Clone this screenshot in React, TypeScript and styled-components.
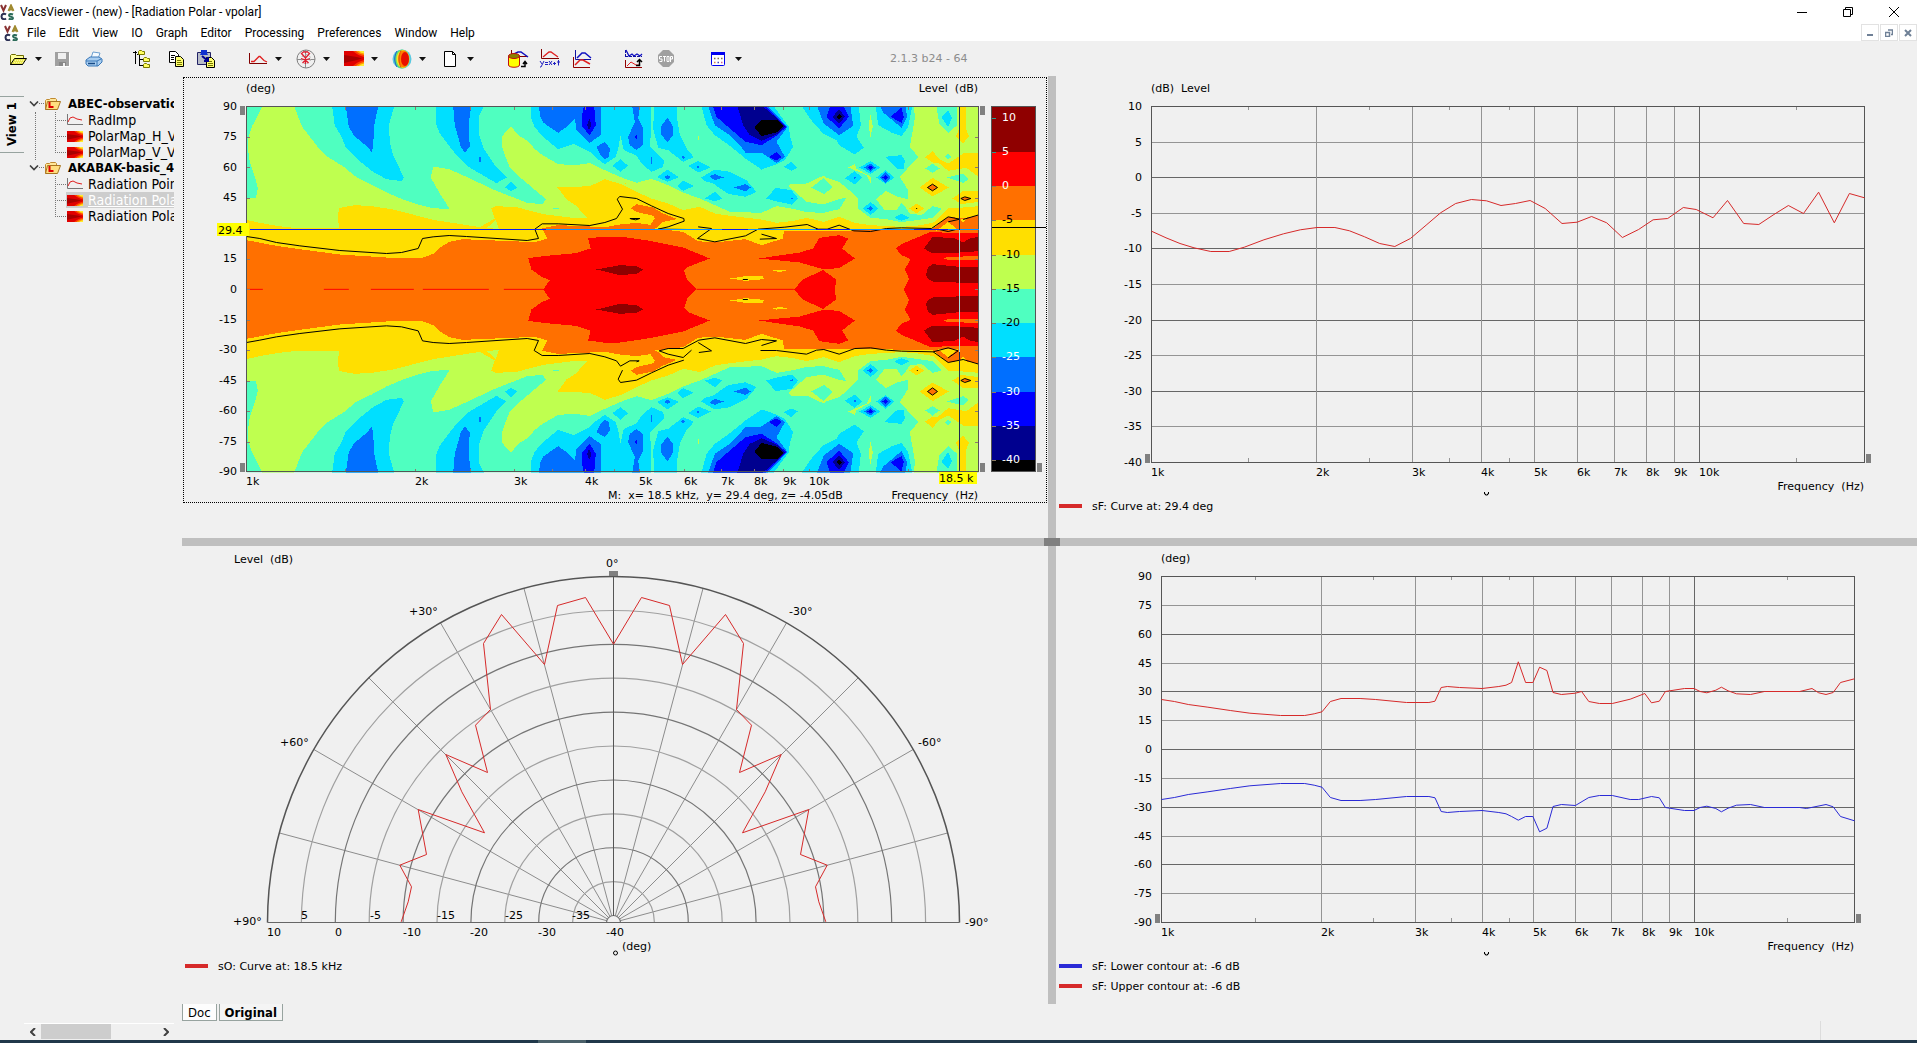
import React from "react";
import styled, { createGlobalStyle, css } from "styled-components";

const GlobalStyle = createGlobalStyle`
  *, *::before, *::after { box-sizing: border-box; }
  body { margin: 0; background: #f0f0f0; color: #000; font-family: "DejaVu Sans", Verdana, sans-serif; font-size: 11px; }
  button { font: inherit; color: inherit; border: 0; background: none; padding: 0; margin: 0; cursor: default; }
  ul { list-style: none; margin: 0; padding: 0; }
  svg { flex: none; }
`;

const UI_FONT = `Roboto, "Segoe UI", sans-serif`;
const TREE_FONT = `"DejaVu Sans Condensed", "DejaVu Sans", Tahoma, sans-serif`;

/* ---------- window frame ---------- */

const Window = styled.div`
  display: flex;
  flex-direction: column;
  min-height: 100vh;
`;
const TitleBar = styled.header`
  display: flex;
  align-items: center;
  height: 24px;
  background: #fff;
  font: 12px/16px ${UI_FONT};
`;
const Title = styled.h1`
  flex: 1;
  margin: 0 0 0 5px;
  font: inherit;
`;
const CaptionButton = styled.button`
  display: flex;
  align-items: center;
  justify-content: center;
  width: 46px;
  height: 20px;
`;
const MenuBar = styled.nav`
  display: flex;
  align-items: center;
  height: 17px;
  padding-left: 4px;
  background: #fff;
  font: 12px/16px ${UI_FONT};
`;
const MenuButton = styled.button`
  margin-left: 13px;
  height: 17px;
  &:first-of-type { margin-left: 8px; }
`;
const MdiButtons = styled.div`
  display: flex;
  gap: 1px;
  margin-left: auto;
`;
const MdiButton = styled.button`
  display: flex;
  align-items: center;
  justify-content: center;
  width: 18px;
  height: 17px;
  border: 1px solid #e2e2e2;
`;

/* ---------- toolbar ---------- */

const Toolbar = styled.div`
  display: flex;
  align-items: center;
  height: 35px;
  padding-left: 4px;
`;
const ToolGroup = styled.div<{ $before?: number; $gap?: number }>`
  display: flex;
  gap: ${(p) => p.$gap ?? 0}px;
  margin-left: ${(p) => p.$before ?? 0}px;
`;
const Split = styled.div`
  display: flex;
`;
const ToolButton = styled.button<{ $narrow?: boolean }>`
  display: flex;
  align-items: center;
  justify-content: center;
  width: ${(p) => (p.$narrow ? 28 : 32)}px;
  height: 28px;
`;
const DropButton = styled.button`
  display: flex;
  align-items: center;
  justify-content: center;
  width: 12px;
  height: 28px;
`;
const Version = styled.span`
  margin-left: 146px;
  color: #8c8c8c;
  font-size: 11px;
  white-space: nowrap;
`;

/* ---------- sidebar ---------- */

const Body = styled.div`
  display: flex;
  flex: 1;
`;
const Sidebar = styled.aside`
  display: flex;
  flex: 0 0 182px;
  padding-right: 8px;
`;
const ViewRail = styled.div`
  flex: 0 0 24px;
  padding-top: 20px;
`;
const ViewTab = styled.button`
  width: 24px;
  height: 57px;
  border: solid #97a39f;
  border-width: 1px 0;
  writing-mode: vertical-rl;
  transform: rotate(180deg);
  font: bold 13px/24px ${TREE_FONT};
`;
const TreeColumn = styled.div`
  display: flex;
  flex-direction: column;
  justify-content: space-between;
  width: 150px;
  padding-top: 20px;
  overflow: hidden;
`;
const Tree = styled.ul`
  font: 14px/16px ${TREE_FONT};
  white-space: nowrap;
`;
const RootButton = styled.button`
  display: flex;
  align-items: center;
  height: 16px;
  padding-left: 5px;
  font-size: 13px;
  font-weight: bold;
`;
const RootText = styled.span`
  margin-left: 7px;
`;
const Branch = styled.ul<{ $continued?: boolean }>`
  margin-left: 11px;
  padding-left: 19px;
  border-left: 1px dotted ${(p) => (p.$continued ? "#777" : "transparent")};
`;
const Leaf = styled.li`
  display: flex;
  align-items: center;
  height: 16px;
  &::before {
    content: "";
    align-self: stretch;
    width: 11px;
    flex: none;
    background:
      repeating-linear-gradient(90deg, #777 0 1px, transparent 1px 2px) 0 8px / 11px 1px no-repeat,
      repeating-linear-gradient(180deg, #777 0 1px, transparent 1px 2px) 0 0 / 1px 16px no-repeat;
  }
  &:last-child::before {
    background:
      repeating-linear-gradient(90deg, #777 0 1px, transparent 1px 2px) 0 8px / 11px 1px no-repeat,
      repeating-linear-gradient(180deg, #777 0 1px, transparent 1px 2px) 0 0 / 1px 8px no-repeat;
  }
`;
const LeafButton = styled.button<{ $selected?: boolean }>`
  display: flex;
  align-items: center;
  gap: 5px;
  height: 16px;
  flex: 1;
  padding-left: 1px;
  ${(p) =>
    p.$selected &&
    css`
      background: #cdcdcd;
      color: #fff;
      text-decoration: underline;
    `}
`;
const ScrollBar = styled.div`
  display: flex;
  align-items: center;
  height: 17px;
  border-top: 1px solid #fff;
`;
const ScrollArrow = styled.button`
  display: flex;
  align-items: center;
  justify-content: center;
  flex: 0 0 17px;
  height: 16px;
`;
const ScrollTrack = styled.div`
  flex: 1;
  height: 16px;
`;
const ScrollThumb = styled.div`
  width: 60%;
  height: 15px;
  background: #cdcdcd;
`;

/* ---------- graph workspace ---------- */

const Workspace = styled.main`
  display: flex;
  flex: 1;
  flex-direction: column;
  min-width: 0;
`;
const Panes = styled.div`
  display: grid;
  flex: 1;
  grid-template-columns: 866fr 8px 861fr;
  grid-template-rows: 462fr 8px 458fr;
`;
const Pane = styled.section<{ $col: number; $row: number }>`
  grid-column: ${(p) => p.$col};
  grid-row: ${(p) => p.$row};
  min-width: 0;
`;
const FocusFrame = styled.div`
  margin: 1px;
  border: 1px dotted #000;
`;
const HSplitter = styled.div`
  grid-column: 1 / 4;
  grid-row: 2;
  background: #bfbfbf;
`;
const VSplitter = styled.div`
  grid-column: 2;
  grid-row: 1 / 4;
  background: #bfbfbf;
`;
const SplitterKnob = styled.div`
  grid-column: 2;
  grid-row: 2;
  margin: 0 -4px;
  background: #808080;
  z-index: 1;
`;
const Chart = styled.svg`
  display: block;
  width: 100%;
  height: auto;
  font-family: "DejaVu Sans", Verdana, sans-serif;
  font-size: 11px;
  text { white-space: pre; }
`;
const Legend = styled.ul`
  padding-left: 3px;
`;
const LegendItem = styled.li`
  display: flex;
  align-items: center;
  gap: 10px;
  height: 20px;
`;
const Swatch = styled.span<{ $color: string }>`
  width: 23px;
  height: 4px;
  background: ${(p) => p.$color};
`;
const SheetTabs = styled.div`
  display: flex;
  gap: 2px;
  height: 17px;
`;
const SheetTab = styled.button<{ $active?: boolean }>`
  padding: 0 5px;
  height: 17px;
  border: solid #97a39f;
  border-width: 0 1px 1px;
  background: ${(p) => (p.$active ? "#f4f4f4" : "#fdfdfd")};
  font: ${(p) => (p.$active ? "bold 13px" : "13px")} / 15px ${TREE_FONT};
`;
const StatusBar = styled.div`
  height: 19px;
  margin-right: 96px;
  border-right: 1px solid #dcdcdc;
`;
const TaskEdge = styled.footer`
  height: 3px;
  padding-left: 538px;
  background: #20384a;
`;
const TaskActive = styled.div`
  width: 48px;
  height: 3px;
  background: #4a6069;
`;

/* ---------- helpers ---------- */

const RED = "#d62a2a";
const BLUE = "#2a2ad6";

const points = (flat: number[], ox: number, oy: number, sx: number, sy: number) =>
  flat
    .map((n, i) => (i % 2 ? (n - oy) * sy : (n - ox) * sx))
    .reduce((out, n, i) => out + (i % 2 ? "," + n.toFixed(1) + " " : n.toFixed(1)), "");

const logPos = (khz: number) => Math.log10(khz) / Math.log10(20);
const KHZ = [1, 2, 3, 4, 5, 6, 7, 8, 9, 10];
const HALF_TICKS = [1.5, 2.5, 3.5, 4.5, 15];

/* ---------- polar map ---------- */

const C = {
  darkRed: "#8f0000", red: "#ff0000", orange: "#ff7000", yellow: "#ffdf00", green: "#bfff4f",
  aqua: "#4fffc0", cyan: "#00dfff", azure: "#006fff", blue: "#0000ff", navy: "#00008f", black: "#000000",
};

/* Contour outlines in map units (3 units per pixel); numbers after "|" belong to the right-hand tile. */
const SHAPES: [string, string][] = [
  [C.green, "247 94 343 94 367 155 415 217 445 246 495 277 525 303 575 328 620 352 665 371 715 388 760 399 810 402 780 355 753 308 760 274 808 282 860 305 940 343 1042 383 1088 387 1098 372 1025 310 990 277 975 240 966 212 966 184 993 153 1015 180 1045 198 1065 222 1088 240 1135 267 1187 270 1230 264 1275 285 1320 305 | 110 323 155 311 205 330 250 352 300 370 345 390 390 410 485 413 530 393 575 400 620 411 670 413 718 402 740 368 716 372 670 388 620 380 580 345 565 333 575 325 620 325 672 301 680 307 718 320 748 345 775 372 775 400 812 428 860 432 905 441 950 435 1000 428 1025 400 998 393 975 412 965 420 930 415 920 400 905 382 890 405 855 405 828 372 858 348 895 365 925 372 925 345 900 305 955 245 930 215 945 130 943 94 1136 94 1136 643 | 200 643 200 370 228 368 234 340 225 305 210 260 204 220 206 185 216 155"],
  [C.yellow, "200 434 240 443 290 452 350 459 478 459 474 430 477 400 490 396 525 390 575 393 640 403 760 434 900 456 945 430 935 400 948 393 1010 396 1090 417 1187 429 1222 428 1187 390 1160 373 1133 337 1230 333 1275 312 1320 326 | 110 323 155 313 205 385 205 372 250 405 300 395 345 415 390 422 485 433 530 443 580 437 620 428 672 440 718 425 765 443 812 450 905 455 950 452 1000 443 1045 400 1090 397 1136 393 1136 643 | 200 643"],
  [C.green, "| 62 326 110 350 155 370 205 385 250 405 250 352 205 330 155 311 110 323"],
  [C.green, "920 459 948 435 957 461"],
  [C.aqua, "1120 400 1138 399 1135 403"],
  [C.orange, "200 495 290 512 360 522 480 538 650 549 725 549 762 535 780 518 808 500 850 492 1065 501 1103 490 1087 459 1135 450 1187 452 1275 456 1320 448 | 110 443 152 449 165 430 160 422 110 410 93 400 110 387 160 397 190 415 232 432 190 440 175 455 165 460 250 470 295 498 345 502 437 492 485 510 550 490 552 466 760 466 1000 460 1045 424 1085 430 1136 420 1136 643 | 200 643"],
  [C.yellow, "| 1010 466 1045 440 1075 464"],
  [C.yellow, "| 1080 430 1102 430 1090 443"],
  [C.red, "1088 643 1110 615 1085 605 1055 583 1045 549 1100 542 1187 534 1232 520 1225 490 1270 484 1320 484 | 150 497 250 517 330 550 265 575 253 587 262 615 293 643"],
  [C.red, "| 478 550 530 542 600 532 640 520 658 488 718 480 745 490 727 520 765 550 718 579 670 582 600 562"],
  [C.red, "| 580 643 610 612 670 585 708 612 706 643"],
  [C.red, "| 888 520 905 507 990 471 1136 475 1136 643 911 643 928 612 915 583 932 552 905 540"],
  [C.darkRed, "| -10 583 60 570 110 573 130 583 110 596 60 600"],
  [C.darkRed, "| 972 520 998 486 1060 488 1090 502 1110 490 1136 485 1136 528 1065 533 998 535"],
  [C.darkRed, "| 978 600 985 576 998 567 1090 576 1136 574 1136 624 1000 620 985 612"],
  [C.orange, "| 1030 549 1045 545 1136 543 1136 555 1045 554"],
  [C.yellow, "| 515 585 530 583 568 584 540 591"],
  [C.yellow, "| 390 610 437 603 488 603 492 612 437 617"],
  [C.cyan, "457 94 643 94 627 150 630 200 640 240 672 307 667 318 620 312 580 290 545 262 497 215 483 180 465 152"],
  [C.azure, "498 94 595 94 583 150 580 215 575 231 563 215 523 182 507 155"],
  [C.cyan, "768 94 912 94 897 125 897 175 912 220 948 275 980 307 950 324 900 295 866 275 830 240 808 212 780 175 770 150"],
  [C.azure, "820 94 874 94 866 150 870 215 855 232 843 215 825 150"],
  [C.azure, "897 246 903 246 901 277"],
  [C.cyan, "976 337 993 320 1013 337 993 348"],
  [C.cyan, "1055 94 1052 125 1065 157 1090 185 1135 222 1183 206 1230 230 1248 248 1275 267 | 48 245 55 220 62 183 72 225 108 240 130 270 155 290 190 275 193 255 150 215 155 150 153 94"],
  [C.azure, "1078 94 1262 94 1262 180 1230 203 1190 165 1185 130 1165 152 1135 173 1090 142 1080 120"],
  [C.blue, "1212 94 1243 94 1248 150 1230 180 1207 155 1207 120"],
  [C.navy, "1222 150 1228 130 1235 150 1228 165"],
  [C.azure, "1250 215 1275 200 1290 220 1288 245 1275 252 1262 240"],
  [C.azure, "| 97 94 120 94 115 130 130 160 128 210 110 225 90 210 85 185 105 140"],
  [C.blue, "| 105 185 109 178 112 185 109 193"],
  [C.azure, "| 152 246 157 246 155 266"],
  [C.cyan, "| 38 272 62 252 85 272 62 290"],
  [C.cyan, "| 163 94 232 94 232 130 240 180 260 220 282 246 250 260 205 225 175 218 160 160"],
  [C.azure, "| 183 155 203 127 220 155 218 183 203 200 183 178"],
  [C.azure, "| 244 246 250 241 256 246 250 252"],
  [C.green, "| 293 185 296 181 298 190 295 195"],
  [C.cyan, "| 172 306 203 283 237 306 203 320"],
  [C.azure, "| 193 306 203 299 213 306 203 313"],
  [C.cyan, "| 265 272 295 257 332 277 295 292"],
  [C.azure, "| 290 275 296 272 300 276 295 279"],
  [C.cyan, "| 232 333 250 317 282 333 250 347"],
  [C.cyan, "| 315 370 345 350 368 370 345 378"],
  [C.cyan, "| 305 307 345 283 390 290 440 315 470 350 437 365 385 356 340 325 315 318"],
  [C.azure, "| 328 303 345 297 372 307 345 315"],
  [C.azure, "| 402 337 437 327 453 337 437 349"],
  [C.cyan, "| 500 370 527 338 575 345 595 370 575 388 527 378"],
  [C.azure, "| 572 370 577 368 580 371 577 374"],
  [C.cyan, "| 305 94 522 94 567 155 570 180 580 215 555 255 530 268 485 283 437 250 390 212 345 180 320 150"],
  [C.azure, "| 325 94 505 94 563 155 530 200 555 245 530 264 485 232 437 232 420 210 390 180 345 150"],
  [C.blue, "| 340 94 498 94 560 155 530 182 485 210 437 200 390 160 350 125"],
  [C.navy, "| 413 94 490 94 520 120 556 155 530 178 485 197 450 180 430 150"],
  [C.black, "| 463 155 485 135 530 133 552 153 530 172 485 183"],
  [C.blue, "| 507 246 530 231 545 246 530 256"],
  [C.cyan, "| 552 275 575 260 593 277 575 286"],
  [C.cyan, "| 607 94 777 94 783 150 770 185 792 217 765 238 718 210 710 195 670 175 630 130"],
  [C.azure, "| 652 94 752 94 760 152 718 180 672 145"],
  [C.blue, "| 690 94 732 94 747 125 718 160 680 125"],
  [C.navy, "| 698 125 718 102 735 125 718 145"],
  [C.black, "| 710 125 718 116 727 125 718 133"],
  [C.green, "| 812 120 819 155 812 185 806 152"],
  [C.cyan, "| 828 94 937 94 925 155 905 183 875 172 835 150"],
  [C.azure, "| 842 94 917 94 922 125 905 158 850 112"],
  [C.blue, "| 872 125 905 97 912 125 905 143"],
  [C.aqua, "| 1010 94 1070 94 1072 150 1045 173 1018 145"],
  [C.cyan, "| 1025 126 1045 105 1056 128 1045 156"],
  [C.yellow, "| 1080 94 1098 94 1098 160 1107 183 1090 205 1068 185 1082 150"],
  [C.yellow, "| 976 247 998 228 1020 253 1045 265 1090 235 1136 232 1136 305 1100 278 1045 287 1015 262 998 262"],
  [C.aqua, "| 1034 245 1045 236 1056 245 1045 252"],
  [C.aqua, "| 976 280 998 265 1020 280 998 293"],
  [C.aqua, "| 1043 307 1090 295 1107 312 1090 323"],
  [C.cyan, "| 855 245 905 240 915 255 912 283 890 280"],
  [C.green, "| 745 277 765 266 770 280 813 305 812 325 800 300"],
  [C.cyan, "| 778 277 812 258 842 277 812 296"],
  [C.azure, "| 793 277 812 265 828 277 812 290"],
  [C.blue, "| 803 277 812 271 820 277 812 284"],
  [C.cyan, "| 735 309 765 288 786 307 765 328"],
  [C.azure, "| 760 308 765 304 769 308 765 312"],
  [C.cyan, "| 830 307 857 285 884 307 857 326"],
  [C.azure, "| 840 307 857 290 872 307 857 322"],
  [C.blue, "| 848 307 857 300 864 307 857 314"],
  [C.cyan, "| 790 400 812 380 836 400 812 420"],
  [C.azure, "| 803 400 812 393 820 400 812 408"],
  [C.cyan, "| 883 428 905 415 930 428 905 437"],
  [C.aqua, "| 635 337 672 308 698 337 672 357"],
  [C.yellow, "| 960 337 998 308 1047 337 998 364"],
  [C.orange, "| 983 337 998 326 1013 337 998 348"],
  [C.yellow, "| 928 400 950 385 973 400 950 414"],
  [C.yellow, "| 1058 370 1090 347 1136 347 1136 380 1085 387"],
  [C.orange, "| 1083 370 1095 364 1112 370 1095 376"],
];

const UPPER_LINES = [
  "200 484 240 490 290 502 360 512 480 526 620 535 665 532 715 520 728 490 760 485 808 481 860 484 1042 496 1076 490 1065 462 1087 446 1135 446 1230 451 1275 442 1310 430 | 68 402 52 372 60 364 110 370 155 392 205 415 252 430 253 438 205 455 175 462 265 463",
  "| 90 430 120 430 108 434 92 431",
  "| 295 455 335 460 293 490 345 500 437 482 475 462 555 456 622 448 655 462 682 462 718 450 762 467 812 469 860 460 905 458 995 460 1045 425 1080 432 1045 440",
  "| 1090 433 1140 418",
  "| 485 477 530 490 480 492",
  "| 1018 463 1045 469 1068 463",
  "| 983 337 998 327 1013 337 998 347 983 337",
  "| 1083 370 1095 365 1113 370 1095 376 1083 370",
  "| 429 613 444 613",
  "| 949 400 952 400",
];
const LOWER_LINES = [
  "200 802 240 795 290 785 360 775 480 761 620 752 665 755 715 767 728 797 760 802 808 805 860 802 1042 790 1076 796 1063 826 1087 841 1135 841 1230 835 1275 845 1310 857 | 62 873 90 857 118 857 110 860",
  "| 68 885 55 912 62 922 110 915 155 893 205 870 252 855",
  "| 275 825 250 847 205 837 178 827 205 820 250 820 297 795 345 788 437 805 485 793 530 797 485 811",
  "| 295 802 335 827 297 832",
  "| 482 826 530 826 620 837 650 825 672 823 718 837 765 820 812 818 860 825 905 828 1000 830 1045 818 1075 827 1045 848",
  "| 1000 830 1045 862 1090 853 1140 868",
  "| 983 949 998 938 1013 949 998 960 983 949",
  "| 1083 916 1095 910 1113 916 1095 922 1083 916",
  "| 429 673 444 673",
  "| 951 886 954 886",
];
const ZERO_DASHES = [[200, 249], [432, 507], [573, 702], [729, 927], [972, 1090], [1550, 1842]];

/* The symmetry axis sits at 643; edges on it run slightly past so that the two halves overlap. */
const decode = (src: string) => {
  let right = false;
  let n = 0;
  const out: string[] = [];
  src.split(" ").filter(Boolean).forEach((tok) => {
    if (tok === "|") { right = !right; return; }
    const v = Number(tok);
    out.push(String(n % 2 ? (v === 643 ? 646 : v) - 94 : v - 200 + (right ? 1260 : 0)));
    n += 1;
  });
  return out.join(" ");
};

const BANDS: [string, number][] = [
  [C.darkRed, 5], [C.red, 0], [C.orange, -5], [C.yellow, -10], [C.green, -15], [C.aqua, -20],
  [C.cyan, -25], [C.azure, -30], [C.blue, -35], [C.navy, -40],
];

function Handle({ x, y, w = 5, h = 9 }: { x: number; y: number; w?: number; h?: number }) {
  return <rect x={x} y={y} width={w} height={h} fill="#808080" />;
}

function PolarMap() {
  const x0 = 62.5, y0 = 28.5, w = 732, h = 366;
  const level = (v: number) => 39.5 + (10 - v) * 6.85;
  const degs = [90, 75, 60, 45, 15, 0, -15, -30, -45, -60, -75, -90];
  return (
    <Chart viewBox="0 0 862 424" role="img" aria-label="Radiation polar map">
      <text x={62} y={14}>(deg)</text>
      <text x={794} y={14} textAnchor="end">{"Level\u00a0 (dB)"}</text>
      <svg x={x0} y={y0} width={w} height={h} viewBox="0 0 2196 1098" preserveAspectRatio="none">
        <rect width={2196} height={1098} fill={C.aqua} />
        <g shapeRendering="crispEdges">
          {SHAPES.map(([fill, src], i) => <polygon key={i} fill={fill} points={decode(src)} />)}
        </g>
        <g shapeRendering="crispEdges" transform="translate(0,1098) scale(1,-1)">
          {SHAPES.map(([fill, src], i) => <polygon key={i} fill={fill} points={decode(src)} />)}
        </g>
        {ZERO_DASHES.map(([a, b]) => (
          <rect key={a} x={a - 200} y={547} width={b - a} height={3} fill={C.red} />
        ))}
        <g fill="none" stroke="#000" strokeWidth={3}>
          {[...UPPER_LINES, ...LOWER_LINES].map((src, i) => <polyline key={i} points={decode(src)} />)}
        </g>
      </svg>
      <g stroke="#8a7a70">
        {[...KHZ.slice(1), ...HALF_TICKS].map((f) => {
          const x = Math.round(62 + logPos(f) * w) + 0.5;
          return <path key={f} d={`M${x} 29v3M${x} 391v3`} />;
        })}
        {degs.slice(1, -1).map((d) => {
          const y = Math.round(28 + (90 - d) * h / 180) + 0.5;
          return <path key={d} d={`M63 ${y}h3M791 ${y}h3`} />;
        })}
      </g>
      <rect x={x0} y={y0} width={w} height={h - 1} fill="none" stroke="#555" />
      <path d="M66 151.5H362" stroke="#0b20e8" />
      <path d="M362 151.5H795" stroke="#1090ff" />
      <path d="M538 151.5h26M632 151.5h34M730 151.5h34" stroke="#0b20e8" />
      <path d="M775.5 29V152M775.5 274V393" stroke="#1c2a50" />
      <path d="M775.5 152V274" stroke="#a8e0e0" />
      {degs.map((d) => (
        <text key={d} x={53} y={Math.round(32 + (90 - d) * 365 / 180)} textAnchor="end">{d}</text>
      ))}
      <rect x={33} y={145} width={32} height={13} fill="#ffff00" />
      <text x={34} y={156}>29.4</text>
      {KHZ.map((f) => <text key={f} x={Math.round(62 + logPos(f) * w)} y={407}>{f}k</text>)}
      <rect x={755} y={394} width={38} height={12} fill="#ffff00" />
      <text x={755} y={404}>18.5 k</text>
      <text x={424} y={421}>{"M:\u00a0 x= 18.5 kHz,\u00a0 y= 29.4 deg, z= -4.05dB"}</text>
      <text x={794} y={421} textAnchor="end">{"Frequency\u00a0 (Hz)"}</text>

      <rect x={808} y={29} width={44} height={365} fill={C.black} />
      {[...BANDS].reverse().map(([fill, to]) => (
        <rect key={to} x={808} y={29} width={44} height={Math.round(level(to)) - 29} fill={fill} />
      ))}
      <rect x={807.5} y={28.5} width={44} height={365} fill="none" stroke="#555" />
      <path d="M808 149.5H862" stroke="#000" />
      {[10, 5, 0, -5, -10, -15, -20, -25, -30, -35, -40].map((v) => (
        <g key={v}>
          <path d={`M808 ${Math.round(level(v)) + 0.5}h4`} stroke={v > 0 ? "#2a9a8a" : "#8a7a60"} />
          <text x={818} y={Math.round(level(v)) + 3} fill={v > -5 || v < -20 ? "#fff" : "#000"}>{v}</text>
        </g>
      ))}
      <Handle x={56} y={28} /><Handle x={56} y={385} />
      <Handle x={796} y={28} /><Handle x={796} y={385} /><Handle x={853} y={385} />
    </Chart>
  );
}

/* ---------- log-frequency graphs ---------- */

type Curve = { color: string; pts: string };

function FrequencyGraph(p: {
  label: string; title: string; x0: number; w: number; h: number; height: number;
  values: number[]; strong: number[]; curves: Curve[];
}) {
  const { x0, w, h } = p;
  const y0 = 30;
  const bottom = y0 + h;
  const top = p.values[0];
  const span = top - p.values[p.values.length - 1];
  const xs = (f: number) => Math.round(x0 + logPos(f) * w) + 0.5;
  const ys = (v: number) => Math.round(y0 + ((top - v) / span) * h) + 0.5;
  return (
    <Chart viewBox={`0 0 861 ${p.height}`} role="img" aria-label={p.label}>
      <text x={x0} y={16}>{p.title}</text>
      {p.values.map((v) => (
        <path key={v} d={`M${x0} ${ys(v)}H${x0 + w}`} stroke={p.strong.includes(v) ? "#666" : "#949494"} />
      ))}
      {KHZ.slice(1).map((f) => (
        <path key={f} d={`M${xs(f)} ${y0}V${bottom}`} stroke={f === 10 ? "#666" : "#949494"} />
      ))}
      {HALF_TICKS.map((f) => (
        <path key={f} d={`M${xs(f)} ${y0}v4M${xs(f)} ${bottom}v-4`} stroke="#949494" />
      ))}
      <rect x={x0 + 0.5} y={y0 + 0.5} width={w} height={h} fill="none" stroke="#555" />
      <g transform={`translate(${x0 + 0.5},${y0 + 0.5})`} fill="none">
        {p.curves.map((c) => <polyline key={c.color} points={c.pts} stroke={c.color} />)}
      </g>
      {p.values.map((v) => (
        <text key={v} x={x0 - 9} y={Math.floor(ys(v)) + 4} textAnchor="end">{v}</text>
      ))}
      {KHZ.map((f) => <text key={f} x={Math.floor(xs(f))} y={bottom + 14}>{f}k</text>)}
      <text x={x0 + w} y={bottom + 28} textAnchor="end">{"Frequency\u00a0 (Hz)"}</text>
      <path d={`M428.5 ${bottom + 30}v2h1v1h2v-1h1v-2`} fill="none" stroke="#000" />
      <Handle x={x0 - 6} y={bottom - 8} />
      <Handle x={x0 + w + 2} y={bottom - 8} />
    </Chart>
  );
}

const LEVEL_CURVE = points([
  199, 468, 225, 488, 250, 505, 275, 518, 305, 529, 338, 529, 365, 516, 400, 494, 435, 476, 465, 464, 495, 457, 527, 457,
  553, 467, 580, 485, 607, 505, 634, 514, 662, 490, 690, 450, 716, 413, 743, 385, 771, 373, 798, 377, 824, 391, 850, 385,
  876, 376, 903, 400, 933, 445, 960, 441, 986, 424, 1013, 443, 1041, 487, 1070, 463, 1096, 434, 1122, 430, 1150, 397,
  1173, 403, 1203, 428, 1229, 376, 1258, 445, 1285, 448, 1312, 418, 1338, 391, 1365, 415, 1392, 351, 1420, 443, 1447, 355,
  1474, 368,
], 199, 94, 713 / 1275, 1 / 3);

const UPPER_CONTOUR = points([
  217, 478, 240, 484, 265, 493, 300, 501, 340, 511, 375, 519, 430, 526, 473, 526, 490, 521, 504, 515, 519, 484, 538, 475,
  572, 475, 600, 478, 655, 487, 695, 487, 706, 483, 717, 442, 728, 439, 750, 442, 790, 445, 820, 439, 833, 435, 843, 427,
  855, 365, 868, 427, 881, 427, 893, 381, 906, 391, 917, 457, 932, 463, 957, 459, 968, 454, 981, 484, 1000, 490, 1023, 490,
  1055, 477, 1081, 460, 1093, 488, 1107, 483, 1118, 454, 1152, 445, 1169, 445, 1180, 454, 1192, 458, 1208, 450, 1218, 441,
  1230, 452, 1245, 461, 1270, 463, 1295, 454, 1358, 454, 1380, 445, 1392, 458, 1405, 463, 1418, 457, 1431, 427, 1456, 416,
], 217, 109, 693 / 1239, 1 / 3);

const LOWER_CONTOUR = points([
  217, 778, 240, 772, 265, 763, 300, 755, 340, 745, 375, 737, 430, 730, 473, 730, 490, 735, 504, 741, 519, 772, 538, 781,
  572, 781, 600, 778, 655, 769, 695, 769, 706, 773, 717, 814, 728, 817, 750, 814, 790, 811, 820, 817, 833, 821, 843, 829,
  855, 840, 868, 829, 881, 829, 893, 875, 906, 864, 917, 799, 932, 793, 957, 796, 981, 772, 1000, 766, 1023, 766, 1055, 778,
  1070, 778, 1093, 769, 1107, 773, 1118, 802, 1152, 811, 1169, 811, 1180, 802, 1192, 798, 1208, 805, 1218, 815, 1230, 804,
  1245, 795, 1270, 793, 1295, 802, 1358, 802, 1370, 805, 1405, 793, 1418, 800, 1431, 829, 1456, 842,
], 217, 109, 693 / 1239, 1 / 3);

/* ---------- polar diagram ---------- */

const POLAR_HALF = [
  [0, 835], [84, 975], [168, 951], [207, 774], [336, 924], [390, 837], [369, 639], [414, 592], [378, 450], [503, 504],
  [455, 392], [387, 269], [586, 339], [561, 204], [641, 172], [606, 107], [616, 62], [637, 2],
];

function PolarDiagram() {
  const cx = 431.5, cy = 376.5;
  const radius = (i: number) => 7 + i * 33.9;
  const side = (s: number) =>
    POLAR_HALF.map(([x, y]) => `${(cx + (s * x) / 3).toFixed(1)},${(cy - y / 3).toFixed(1)}`).join(" ");
  const labels: [string, number, number][] = [
    ["0°", 424, 21], ["+30°", 227, 69], ["+60°", 98, 200], ["+90°", 51, 379], ["-30°", 607, 69], ["-60°", 736, 200], ["-90°", 783, 380],
    ["5", 119, 373], ["-5", 188, 373], ["-15", 255, 373], ["-25", 323, 373], ["-35", 390, 373],
    ["10", 85, 390], ["0", 153, 390], ["-10", 221, 390], ["-20", 288, 390], ["-30", 356, 390], ["-40", 424, 390],
  ];
  return (
    <Chart viewBox="0 0 866 410" role="img" aria-label="Polar diagram">
      <text x={52} y={17}>{"Level\u00a0 (dB)"}</text>
      <g fill="none">
        {[-75, -60, -45, -30, -15, 15, 30, 45, 60, 75].map((a) => {
          const s = Math.sin((a * Math.PI) / 180), c = Math.cos((a * Math.PI) / 180);
          return <line key={a} x1={cx + 7 * s} y1={cy - 7 * c} x2={cx + 346 * s} y2={cy - 346 * c} stroke="#8c8c8c" />;
        })}
        {Array.from({ length: 11 }, (_, i) => {
          const r = radius(i);
          return (
            <path
              key={i}
              d={`M${cx - r} ${cy}A${r} ${r} 0 0 1 ${cx + r} ${cy}`}
              stroke={i === 10 ? "#555" : i % 2 ? "#a0a0a0" : "#757575"}
              strokeWidth={i === 10 ? 1.5 : 1.2}
            />
          );
        })}
        <path d={`M${cx} 30V370`} stroke="#555" />
        <path d={`M${cx - 346} ${cy}H${cx + 346}`} stroke="#666" />
        <polyline points={side(-1)} stroke={RED} />
        <polyline points={side(1)} stroke={RED} />
      </g>
      {labels.map(([t, x, y], i) => <text key={i} x={x} y={y}>{t}</text>)}
      <text x={440} y={404}>(deg)</text>
      <circle cx={433.5} cy={407} r={2} fill="none" stroke="#000" />
      <Handle x={427} y={25} w={9} h={5} />
    </Chart>
  );
}

/* ---------- icons ---------- */

const Icon = ({ children, w = 20, h = 20 }: { children: React.ReactNode; w?: number; h?: number }) => (
  <svg width={w} height={h} viewBox={`0 0 ${w} ${h}`} fill="none" aria-hidden="true">{children}</svg>
);
const Logo = () => (
  <svg width="15" height="16" viewBox="0 0 15 16" fill="none" strokeWidth="2" aria-hidden="true">
    <path d="M1 1l2.500 5.500L6 1" stroke="#8a3333" />
    <path d="M8.500 7L11 1.500 13.500 7M9.500 5.500h3" stroke="#a08a30" />
    <path d="M6 10.500C4 9 1.500 10 1.500 12.500S4 16 6 14.500" stroke="#2c3054" />
    <path d="M13 10.500c-2-1-4-.5-4 .8 0 1.700 4 1.200 4 2.800 0 1.300-2.500 1.500-4.300.6" stroke="#2b6b58" />
  </svg>
);
const Caret = () => (
  <svg width="7" height="4" viewBox="0 0 7 4" aria-hidden="true"><path d="M0 0h7L3.500 4z" fill="#111" /></svg>
);
const OpenIcon = () => (
  <Icon>
    <path d="M2.500 15.500V6.500l1-1h4l1 1h7v3" fill="#ffff9a" stroke="#6b6b00" />
    <path d="M2.500 15.500l4-6h12l-4 6z" fill="#e8e850" stroke="#000" />
    <path d="M7 11.500h9M6 13.500h9" stroke="#fff8a0" strokeDasharray="1 1" />
    <path d="M2.500 15.500h12" stroke="#000" />
  </Icon>
);
const SaveIcon = () => (
  <Icon>
    <path d="M3 3h14v14H3z" fill="#a0a0a0" /><path d="M6 4h8v6H6z" fill="#f0f0f0" /><path d="M7 13h7v4H7z" fill="#888" /><path d="M11 14h2v3h-2z" fill="#f0f0f0" />
    <path d="M17.500 4v13.500H4" stroke="#fff" />
  </Icon>
);
const PrintIcon = () => (
  <Icon>
    <path d="M7 9l2-6 7 1-2 6z" fill="#f4faff" stroke="#6d9fcf" />
    <path d="M2 11l4-3h9l3 2v3l-4 4H4l-2-2z" fill="#a8cdf0" stroke="#3a78b8" />
    <path d="M2 12h11l4-2M13 12v5" stroke="#3a78b8" /><path d="M4 14.500h7" stroke="#174a86" strokeWidth="1.500" />
  </Icon>
);
const TreeIcon = () => (
  <Icon>
    <path d="M3.500 2v13M1 3.500h4M5 5.500h5M7.500 6v11M7.500 10.500h4M7.500 16.500h4" stroke="#000" />
    {[[6, 1], [11, 8], [11, 14]].map(([x, y]) => (
      <path key={y} d={`M${x + 0.5} ${y + 4.5}v-3l1-1h2l1 1h2v3z`} fill="#ffff60" stroke="#7a7a00" />
    ))}
  </Icon>
);
const CopyIcon = () => (
  <Icon w={26}>
    <g transform="translate(6,0)">
      <path d="M2.500 2.500h6l3 3v8h-9z" fill="#fff" stroke="#000" /><path d="M4 6.500h4M4 8.500h3M4 10.500h3" stroke="#000" />
      <path d="M8.500 7.500h5l3 3v7h-8z" fill="#ffff70" stroke="#000" /><path d="M10 11.500h4M10 13.500h5M10 15.500h5" stroke="#777700" />
    </g>
  </Icon>
);
const PasteIcon = () => (
  <Icon>
    <path d="M1.500 3.500h13v12h-13z" fill="#b8bcc8" stroke="#222266" /><path d="M5 1h6v3l1 2H4l1-2z" fill="#1030d0" />
    <path d="M10.500 8.500h5l3 3v7h-8z" fill="#ffff70" stroke="#000" /><path d="M12 12.500h4M12 14.500h5M12 16.500h5" stroke="#777700" />
    <path d="M6 7l6 5M12 8v4H8" stroke="#000090" strokeWidth="2" />
  </Icon>
);
const CurveIcon = () => (
  <Icon>
    <path d="M1.500 4v10.500H19" stroke="#800000" /><path d="M3 12.500h3l5-5h1l4 4 3 1.500" stroke="#e02020" strokeWidth="1.300" />
  </Icon>
);
const PolarIcon = () => (
  <Icon>
    <circle cx="10" cy="10" r="9" stroke="#808080" /><path d="M1 10.500h18M9.500 1v18" stroke="#8c8c8c" />
    <circle cx="10" cy="10" r="4.500" stroke="#aaa" strokeDasharray="2 2" />
    <path d="M9.500 15V8M9.500 9L5.500 4.500 8 2.500l1.500 1 1.500-1L13.500 4.500zM9.500 11L5 9.500M9.500 11L14 9.500M9.500 11L6.500 14M9.500 11l3 3" stroke="#e02030" strokeWidth="1.300" />
  </Icon>
);
const HeatGlyph = ({ w, h }: { w: number; h: number }) => (
  <svg width={w} height={h} viewBox="0 0 20 15" preserveAspectRatio="none" aria-hidden="true">
    <path d="M0 0h20v15H0z" fill="#e00000" />
    <path d="M0 4l13 2 5 1.500-5 1.500L0 12z" fill="#a80000" />
    <path d="M20 0v6C16 5 12 3 9 0zM20 15V9c-4 1-8 3-11 6z" fill="#ff3a00" />
    <path d="M20 0v4c-4-1-6-2-8-4zM20 15v-4c-4 1-6 2-8 4z" fill="#ff9a00" />
    <path d="M20 0v2.500c-2-.5-4-1-5-2.500zM20 15v-2.500c-2 .5-4 1-5 2.500z" fill="#ffee30" />
  </svg>
);
const SphereIcon = () => (
  <Icon>
    <circle cx="10" cy="10" r="9.500" fill="#58c8e0" /><ellipse cx="10" cy="10" rx="7.500" ry="9.500" fill="#60e070" />
    <ellipse cx="11" cy="10" rx="6.500" ry="9" fill="#ffe020" /><ellipse cx="11.500" cy="10" rx="5.500" ry="8.500" fill="#ff8000" />
    <ellipse cx="13" cy="10" rx="4" ry="7" fill="#e81000" /><path d="M5 2C2 7 2 13 5 18" stroke="#1860d0" />
    <path d="M9 1.500C6.500 7 6.500 13 9 18.500" stroke="#e05010" />
  </Icon>
);
const PageIcon = () => (
  <Icon><path d="M4.500 2.500h8l3 3v12h-11z" fill="#fff" stroke="#000" /><path d="M12.500 2.500v3h3" stroke="#000" /></Icon>
);
const StoreIcon = () => (
  <Icon w={22}>
    <path d="M4.500 1v6M4 7.500h16" stroke="#800000" /><path d="M5 6l6-3h3l7 5" stroke="#1010c0" strokeWidth="1.500" />
    <path d="M1.500 7v9c0 3 11 3 11 0V7z" fill="#ffff00" stroke="#c01010" /><ellipse cx="7" cy="7" rx="5.500" ry="2.500" fill="#8a8000" stroke="#c01010" />
    <path d="M14 17.500h4V13M16 15l2-2.500 2 2.500" stroke="#000" strokeWidth="1.500" />
  </Icon>
);
const FormulaIcon = () => (
  <Icon w={22}>
    <path d="M2.500 0v9.500H20" stroke="#800000" /><path d="M4 8l6-5h2l7 5" stroke="#e02020" strokeWidth="1.300" />
    <path d="M1 12l2 3M5 12l-3 6H1M6 13.500h3M6 15.500h3M10 12l3 4M13 12l-3 4M14 14.500h3M15.500 13v3M18 13h3M19.500 11v5.500" stroke="#2020c0" />
  </Icon>
);
const TwinIcon = () => (
  <Icon>
    <path d="M3.500 1v9.500H19" stroke="#1010a0" /><path d="M5 9l5-5h3l6 5" stroke="#1010c0" strokeWidth="1.500" />
    <path d="M1.500 8v10.500H18" stroke="#900000" /><path d="M3 16l5-5h3l7 4" stroke="#e02020" strokeWidth="1.500" />
  </Icon>
);
const WaveIcon = () => (
  <Icon>
    <path d="M1.500 1v7.500M1 7.500h17" stroke="#1010a0" strokeDasharray="3 1" /><path d="M2 1l3 6 3-2 2 2 3-2 3 2 2-2" stroke="#1010c0" strokeWidth="1.300" />
    <path d="M1.500 11v7.500H18" stroke="#900000" /><path d="M3 17l4-4 5 3h4" stroke="#e02020" /><path d="M12 16.500h3.500V11M13 13l2.500-2.500L18 13" stroke="#000" strokeWidth="1.500" />
  </Icon>
);
const StopIcon = () => (
  <Icon>
    <path d="M7 1h6l5 5v7l-5 5H7l-5-5V6z" fill="#a0a0a0" />
    <path d="M6 7.500H3.500v2.500H6v2.500H3.500M7 7.500h3M8.500 7.500v5M11 7.500h2v5h-2zM14.500 13V7.500h2V10h-2" stroke="#fff" />
  </Icon>
);
const GridIcon = () => (
  <Icon>
    <rect x="3.500" y="3.500" width="13" height="13" rx="1" fill="#fff" stroke="#0000f0" /><path d="M3 3h14v3H3z" fill="#0000f0" />
    <path d="M6 9.500h1.500M9.500 9.500H11M13 9.500h1.500" stroke="#807050" strokeWidth="1.600" /><path d="M6 13.500h1.500" stroke="#e08040" strokeWidth="1.600" /><path d="M9.500 13.500H11" stroke="#4040c0" strokeWidth="1.600" /><path d="M13 13.500h1.500" stroke="#d06090" strokeWidth="1.600" />
  </Icon>
);
const ChevronDown = () => (
  <svg width="10" height="6" viewBox="0 0 10 6" fill="none" aria-hidden="true"><path d="M1 0.500l4 4 4-4" stroke="#404040" strokeWidth="1.600" /></svg>
);
const FolderIcon = () => (
  <svg width="22" height="14" viewBox="0 0 22 14" fill="none" aria-hidden="true">
    <path d="M0 6.500h7" stroke="#777" strokeDasharray="1 1" />
    <path d="M6.500 12.500V3.500l1-1h3l1-1h5l1 1v2" fill="#ffe79a" stroke="#c08a30" /><path d="M6.500 12.500l2-8h13l-3 8z" fill="#ffdf80" stroke="#a87420" />
    <path d="M10.500 5v5h4" stroke="#e00000" strokeWidth="2" />
  </svg>
);
const MiniCurve = () => (
  <svg width="16" height="12" viewBox="0 0 16 12" fill="none" aria-hidden="true">
    <path d="M.5 0v10.500H16" stroke="#777" /><path d="M1 8l2-4 3-1 4 2 5 1" stroke="#e02020" />
  </svg>
);

const SPLITS: [string, () => React.JSX.Element][] = [
  ["New curve graph", CurveIcon], ["New polar graph", PolarIcon], ["New contour graph", () => <HeatGlyph w={20} h={15} />],
  ["New balloon graph", SphereIcon], ["New page", PageIcon],
];
const SplitTool = ({ label, icon: Glyph }: { label: string; icon: () => React.JSX.Element }) => (
  <Split>
    <ToolButton $narrow aria-label={label}><Glyph /></ToolButton>
    <DropButton aria-label={label + " options"}><Caret /></DropButton>
  </Split>
);
const Tool = ({ label, icon: Glyph }: { label: string; icon: () => React.JSX.Element }) => (
  <ToolButton aria-label={label}><Glyph /></ToolButton>
);

const MENUS = ["File", "Edit", "View", "IO", "Graph", "Editor", "Processing", "Preferences", "Window", "Help"];
const TREE = [
  { name: "ABEC-observatio", items: [["RadImp", "curve"], ["PolarMap_H_V", "map"], ["PolarMap_V_V", "map"]] },
  { name: "AKABAK-basic_4", items: [["Radiation Poin", "curve"], ["Radiation Pola", "map"], ["Radiation Pola", "map"]] },
];

export default function App() {
  return (
    <Window>
      <GlobalStyle />
      <TitleBar>
        <Logo />
        <Title>VacsViewer - (new) - [Radiation Polar - vpolar]</Title>
        <CaptionButton aria-label="Minimize"><svg width="10" height="10" fill="none"><path d="M0 5.500h10" stroke="#000" /></svg></CaptionButton>
        <CaptionButton aria-label="Restore"><svg width="10" height="10" fill="none"><path d="M.5 2.500h7v7h-7zM2.500 2.500v-2h7v7h-2" stroke="#000" /></svg></CaptionButton>
        <CaptionButton aria-label="Close"><svg width="10" height="10" fill="none"><path d="M0 0l10 10M10 0L0 10" stroke="#000" /></svg></CaptionButton>
      </TitleBar>
      <MenuBar>
        <Logo />
        {MENUS.map((m) => <MenuButton key={m}>{m}</MenuButton>)}
        <MdiButtons>
          <MdiButton aria-label="Minimize graph"><svg width="8" height="8"><path d="M1 6h6" stroke="#6f8096" strokeWidth="2" /></svg></MdiButton>
          <MdiButton aria-label="Restore graph"><svg width="8" height="8" fill="none"><path d="M.5 3.500h4v4h-4zM3 1h4.500v4.500H6" stroke="#6f8096" strokeWidth="1.500" /></svg></MdiButton>
          <MdiButton aria-label="Close graph"><svg width="8" height="8"><path d="M1 1l6 6M7 1L1 7" stroke="#6f8096" strokeWidth="2" /></svg></MdiButton>
        </MdiButtons>
      </MenuBar>
      <Toolbar>
        <SplitTool label="Open" icon={OpenIcon} />
        <ToolGroup $before={2}><Tool label="Save" icon={SaveIcon} /><Tool label="Print" icon={PrintIcon} /></ToolGroup>
        <ToolGroup $before={16}>
          <Tool label="Navigator" icon={TreeIcon} /><Tool label="Copy" icon={CopyIcon} /><Tool label="Paste" icon={PasteIcon} />
        </ToolGroup>
        <ToolGroup $before={22} $gap={8}>
          {SPLITS.map(([label, icon]) => <SplitTool key={label} label={label} icon={icon} />)}
        </ToolGroup>
        <ToolGroup $before={26}>
          <Tool label="Store curve" icon={StoreIcon} /><Tool label="Formula" icon={FormulaIcon} /><Tool label="Combine curves" icon={TwinIcon} />
        </ToolGroup>
        <ToolGroup $before={20}><Tool label="Update" icon={WaveIcon} /><Tool label="Stop" icon={StopIcon} /></ToolGroup>
        <ToolGroup $before={22}><SplitTool label="Windows" icon={GridIcon} /></ToolGroup>
        <Version>2.1.3 b24 - 64</Version>
      </Toolbar>
      <Body>
        <Sidebar>
          <ViewRail><ViewTab>View 1</ViewTab></ViewRail>
          <TreeColumn>
            <Tree>
              {TREE.map((root, r) => (
                <li key={root.name}>
                  <RootButton><ChevronDown /><FolderIcon /><RootText>{root.name}</RootText></RootButton>
                  <Branch $continued={r === 0}>
                    {root.items.map(([name, kind], i) => (
                      <Leaf key={i}>
                        <LeafButton $selected={r === 1 && i === 1}>
                          {kind === "curve" ? <MiniCurve /> : <HeatGlyph w={16} h={11} />}
                          {name}
                        </LeafButton>
                      </Leaf>
                    ))}
                  </Branch>
                </li>
              ))}
            </Tree>
            <ScrollBar>
              <ScrollArrow aria-label="Scroll left"><svg width="6" height="8" fill="none"><path d="M5 0L1 4l4 4" stroke="#404040" strokeWidth="2" /></svg></ScrollArrow>
              <ScrollTrack><ScrollThumb /></ScrollTrack>
              <ScrollArrow aria-label="Scroll right"><svg width="6" height="8" fill="none"><path d="M1 0l4 4-4 4" stroke="#404040" strokeWidth="2" /></svg></ScrollArrow>
            </ScrollBar>
          </TreeColumn>
        </Sidebar>
        <Workspace>
          <Panes>
            <Pane $col={1} $row={1}><FocusFrame><PolarMap /></FocusFrame></Pane>
            <Pane $col={3} $row={1}>
              <FrequencyGraph
                label="Level over frequency" title={"(dB)\u00a0 Level"} x0={95} w={713} h={356} height={420}
                values={[10, 5, 0, -5, -10, -15, -20, -25, -30, -35, -40]} strong={[0, -10, -20, -30]}
                curves={[{ color: RED, pts: LEVEL_CURVE }]}
              />
              <Legend><LegendItem><Swatch $color={RED} />sF: Curve at: 29.4 deg</LegendItem></Legend>
            </Pane>
            <Pane $col={1} $row={3}>
              <PolarDiagram />
              <Legend><LegendItem><Swatch $color={RED} />sO: Curve at: 18.5 kHz</LegendItem></Legend>
            </Pane>
            <Pane $col={3} $row={3}>
              <FrequencyGraph
                label="Contour angles over frequency" title="(deg)" x0={105} w={693} h={346} height={410}
                values={[90, 75, 60, 45, 30, 15, 0, -15, -30, -45, -60, -75, -90]} strong={[60, 30, 0, -30, -60]}
                curves={[{ color: RED, pts: UPPER_CONTOUR }, { color: BLUE, pts: LOWER_CONTOUR }]}
              />
              <Legend>
                <LegendItem><Swatch $color={BLUE} />sF: Lower contour at: -6 dB</LegendItem>
                <LegendItem><Swatch $color={RED} />sF: Upper contour at: -6 dB</LegendItem>
              </Legend>
            </Pane>
            <HSplitter /><VSplitter /><SplitterKnob />
          </Panes>
          <SheetTabs><SheetTab>Doc</SheetTab><SheetTab $active>Original</SheetTab></SheetTabs>
          <StatusBar />
        </Workspace>
      </Body>
      <TaskEdge><TaskActive /></TaskEdge>
    </Window>
  );
}
